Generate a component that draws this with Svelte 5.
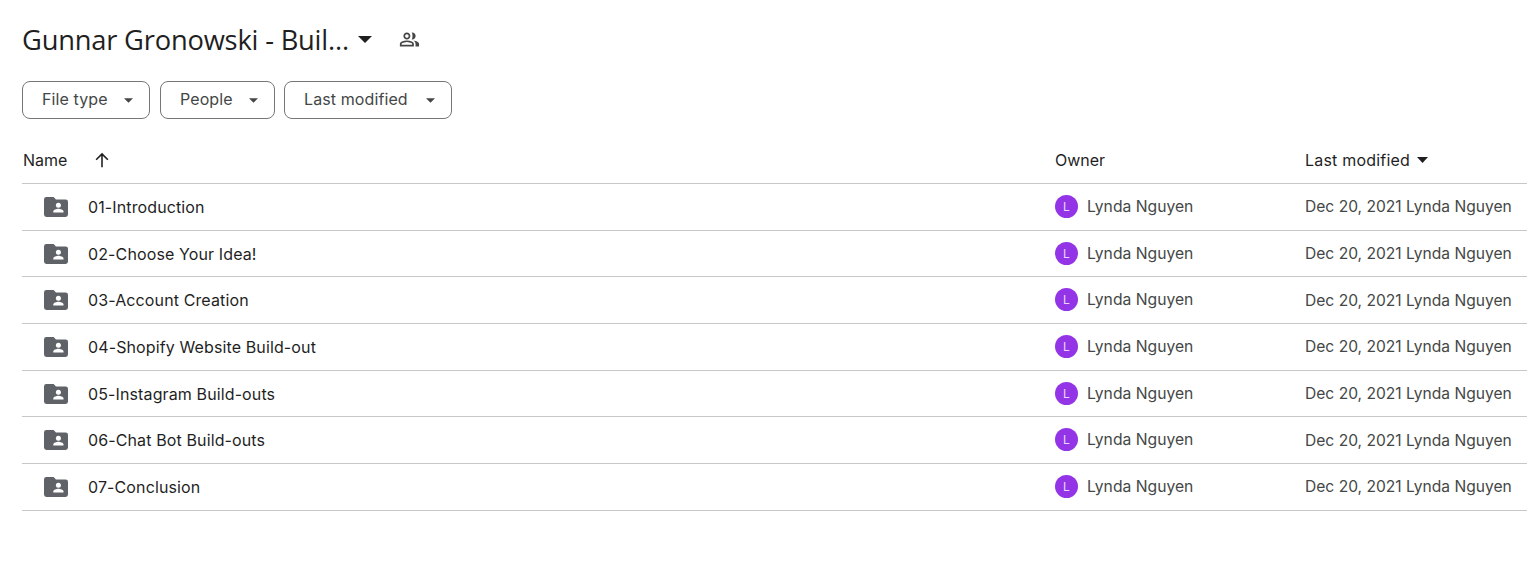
<script>
  const folders = ['01-Introduction','02-Choose Your Idea!','03-Account Creation','04-Shopify Website Build-out','05-Instagram Build-outs','06-Chat Bot Build-outs','07-Conclusion'];
  const filters = [{ label: 'File type', w: 128 }, { label: 'People', w: 115 }, { label: 'Last modified', w: 168 }];
</script>

<main class="page">
  <header class="title-row">
    <h1>Gunnar Gronowski - Buil...</h1>
    <svg class="title-caret" width="14" height="7" viewBox="0 0 14 7"><path d="M0 0h14L7 7z" fill="#1f1f1f"/></svg>
    <svg class="shared" width="24" height="24" viewBox="0 0 24 24" fill="#444746"><path d="M1 20v-2.8c0-.57.15-1.08.44-1.55.3-.46.69-.82 1.18-1.07a14.6 14.6 0 0 1 3.15-1.16 13.8 13.8 0 0 1 6.46 0c1.07.26 2.12.65 3.15 1.16.49.25.88.61 1.18 1.07.29.47.44.98.44 1.55V20H1zm2-2h12v-.8a.96.96 0 0 0-.5-.85 12.7 12.7 0 0 0-2.7-1 11.5 11.5 0 0 0-5.6 0c-.93.23-1.83.56-2.7 1a.96.96 0 0 0-.5.85V18zm6-6c-1.1 0-2.04-.39-2.83-1.17A3.85 3.85 0 0 1 5 8c0-1.1.39-2.04 1.17-2.83A3.85 3.85 0 0 1 9 4c1.1 0 2.04.39 2.83 1.17C12.6 5.96 13 6.9 13 8s-.39 2.04-1.17 2.83C11.04 11.6 10.1 12 9 12zm0-2c.55 0 1.02-.2 1.41-.59C10.8 9.02 11 8.55 11 8s-.2-1.02-.59-1.41A1.93 1.93 0 0 0 9 6c-.55 0-1.02.2-1.41.59C7.2 6.98 7 7.45 7 8s.2 1.02.59 1.41C7.98 9.8 8.45 10 9 10zm5.5 1.9c.6-.72.9-2.1.9-3.9s-.3-3.2-.9-3.9c.2-.07.4-.1.6-.1 1.1 0 2 .4 2.8 1.2.8.8 1.1 1.7 1.1 2.8s-.3 2-1.1 2.8c-.8.8-1.7 1.2-2.8 1.2l-.6-.1zM18.9 20v-3c0-.73-.2-1.43-.6-2.1-.4-.67-1-1.24-1.8-1.72.85.1 1.65.27 2.4.52.75.25 1.45.55 2.1.9.6.33 1.06.7 1.38 1.1.32.4.52.85.52 1.3V20h-4z"/></svg>
  </header>

  <div class="filters">
    {#each filters as f}
      <button class="chip" style="width: {f.w}px"><span class="chip-label">{f.label}</span><svg width="9" height="5" viewBox="0 0 10 5"><path d="M0 0h10L5 5z" fill="#444746"/></svg></button>
    {/each}
  </div>

  <div class="table">
    <div class="head row-grid">
      <div class="name-head"><span>Name</span>
        <svg width="18" height="18" viewBox="0 0 16 16"><path d="M8 14.5V3M2.8 7.8 8 2.6l5.2 5.2" fill="none" stroke="#1f1f1f" stroke-width="1.4"/></svg>
      </div>
      <div class="owner-head">Owner</div>
      <div class="mod-head">Last modified
        <svg width="11" height="6" viewBox="0 0 11 6"><path d="M0 0h11L5.5 6z" fill="#1f1f1f"/></svg>
      </div>
    </div>
    {#each folders as name}
      <div class="row row-grid">
        <div class="name">
          <svg class="folder" width="24" height="20" viewBox="0 0 24 20"><path d="M2.4 0h7.2L12 2.4h9.6A2.4 2.4 0 0 1 24 4.8v12.8a2.4 2.4 0 0 1-2.4 2.4H2.4A2.4 2.4 0 0 1 0 17.6V2.4A2.4 2.4 0 0 1 2.4 0z" fill="#5f6368"/><circle cx="14.4" cy="8.2" r="2.5" fill="#fff"/><path d="M9.3 15.4v-.9c0-1.9 3.4-2.8 5.1-2.8s5.1.9 5.1 2.8v.9z" fill="#fff"/></svg>
          <span>{name}</span>
        </div>
        <div class="owner"><span class="avatar">L</span><span>Lynda Nguyen</span></div>
        <div class="mod">Dec 20, 2021 Lynda Nguyen</div>
      </div>
    {/each}
  </div>
</main>

<style>
  :global(body) { margin: 0; background: #fff; }
  .page { height: 564px; overflow: hidden; padding: 16px 0 0 22px; box-sizing: border-box; font-family: Inter, "Liberation Sans", sans-serif; color: #1f1f1f; }
  .title-row { display: flex; align-items: center; height: 46px; }
  h1 { margin: 0; font-size: 27.3px; font-weight: 400; font-family: "Open Sans", sans-serif; letter-spacing: -.2px; white-space: nowrap; width: 326px; }
  .title-caret { margin-left: 10px; }
  .shared { margin-left: 27px; width: 21px; height: 21px; }
  .filters { display: flex; gap: 10px; margin-top: 19px; }
  .chip { display: flex; align-items: center; justify-content: space-between; height: 38px; box-sizing: border-box; padding: 0 16px 0 19px; background: #fff; border: 1px solid #747775; border-radius: 8px; font: 400 16px Inter, sans-serif; color: #444746; letter-spacing: .1px; }
  .chip-label { margin-bottom: 2px; }
  .chip:last-child { margin-left: -1px; }
  .table { margin-top: 19px; }
  .row-grid { display: grid; grid-template-columns: 1033px 250px 1fr; align-items: center; box-sizing: border-box; border-bottom: 1px solid #c7c7c7; }
  .head { height: 46px; font-size: 16px; font-weight: 400; padding-bottom: 2px; }
  .name-head { display: flex; align-items: center; gap: 26px; padding-left: 1px; }
  .mod-head { display: flex; align-items: center; gap: 7px; white-space: nowrap; letter-spacing: .2px; }
  .row { height: 46.67px; font-size: 16px; }
  .name { display: flex; align-items: center; padding: .5px 0 0 22px; white-space: nowrap; letter-spacing: .12px; }
  .folder { margin-right: 20px; }
  .owner { display: flex; align-items: center; gap: 9px; color: #444746; font-size: 15.7px; margin-top: -.6px; }
  .avatar { display: grid; place-items: center; width: 23px; height: 23px; border-radius: 50%; background: #9334e6; color: #e8d8fb; font-size: 12px; }
  .mod { color: #444746; white-space: nowrap; font-size: 15.6px; }
</style>
